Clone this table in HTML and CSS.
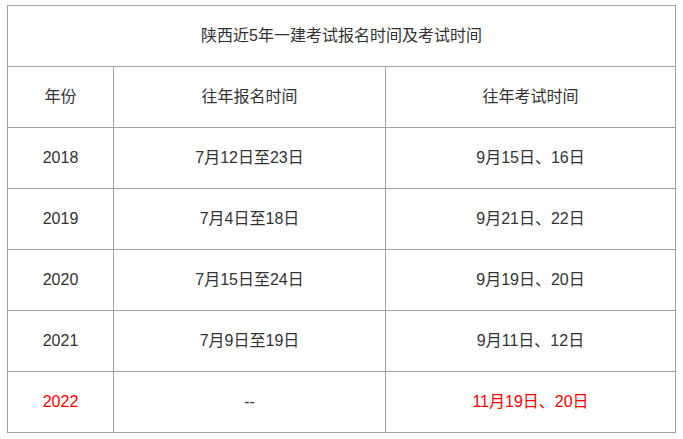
FILE: index.html
```html
<!DOCTYPE html>
<html lang="zh-CN">
<head>
<meta charset="utf-8">
<title>陕西近5年一建考试报名时间及考试时间</title>
<link rel="stylesheet" href="styles.css">
</head>
<body>
<table class="exam-table">
  <colgroup>
    <col class="c-year">
    <col class="c-reg">
    <col class="c-exam">
  </colgroup>
  <tr><td colspan="3">陕西近5年一建考试报名时间及考试时间</td></tr>
  <tr><td>年份</td><td>往年报名时间</td><td>往年考试时间</td></tr>
  <tr><td>2018</td><td>7月12日至23日</td><td>9月15日、16日</td></tr>
  <tr><td>2019</td><td>7月4日至18日</td><td>9月21日、22日</td></tr>
  <tr><td>2020</td><td>7月15日至24日</td><td>9月19日、20日</td></tr>
  <tr><td>2021</td><td>7月9日至19日</td><td>9月11日、12日</td></tr>
  <tr class="current"><td class="red">2022</td><td>--</td><td class="red">11月19日、20日</td></tr>
</table>
</body>
</html>
```

FILE: styles.css
```css
html, body {
  margin: 0;
  padding: 0;
  background: #fff;
}
body {
  padding: 5px 0 0 7px;
  font-family: "Liberation Sans", "Noto Sans CJK SC", sans-serif;
  font-size: 16px;
  color: #333;
}
.exam-table {
  border-collapse: collapse;
  table-layout: fixed;
  width: 669px;
}
.c-year { width: 106px; }
.c-reg { width: 272px; }
.exam-table td {
  border: 1px solid #a0a0aa;
  height: 60px;
  padding: 0;
  text-align: center;
  vertical-align: middle;
  line-height: 20px;
}
.exam-table td.red {
  color: #ff0000;
}
```
